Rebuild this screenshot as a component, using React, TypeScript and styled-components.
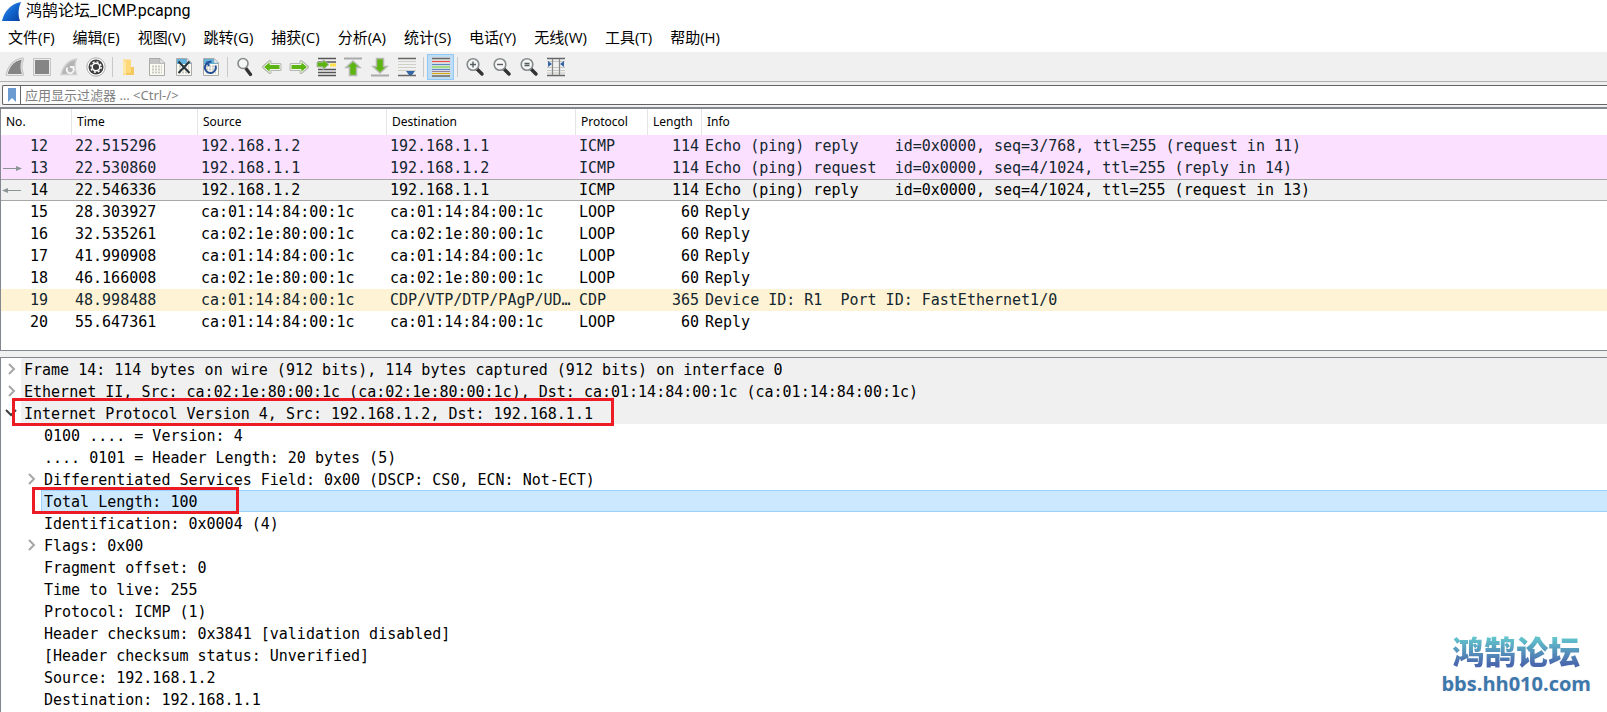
import React from 'react';
import styled, { createGlobalStyle, css } from 'styled-components';

const MONO = '"DejaVu Sans Mono", "Liberation Mono", monospace';
const UI = '"Noto Sans", "Noto Sans CJK SC", sans-serif';
const CHROME = '"Open Sans", "Noto Sans CJK SC", sans-serif';

const Global = createGlobalStyle`
  *, *::before, *::after { box-sizing: border-box; }
  html, body { margin: 0; height: 100%; overflow: hidden; }
  body { background: #fff; color: #000; font-family: ${UI}; }
  #root { height: 100%; }
  button { font: inherit; color: inherit; background: none; border: 0; padding: 0; margin: 0; }
`;

const Window = styled.div`
  position: relative;
  display: flex;
  flex-direction: column;
  height: 100%;
  background: #f0f0f0;
`;

const TitleBar = styled.header`
  display: flex;
  align-items: center;
  gap: 4px;
  height: 24px;
  padding-left: 2px;
  background: #fff;
`;

const Title = styled.h1`
  margin: 0;
  font-family: "Roboto", "Noto Sans CJK SC", sans-serif;
  font-size: 16px;
  font-weight: 400;
  line-height: 22px;
  height: 24px;
`;

const MenuBar = styled.nav`
  display: flex;
  gap: 2px;
  height: 28px;
  background: #fff;
`;

const MenuItem = styled.button`
  && {
    padding: 0 8px;
    font-family: ${CHROME};
    font-size: 15px;
    line-height: 26px;
  }
  height: 26px;
  white-space: nowrap;
`;

const Toolbar = styled.div`
  display: flex;
  align-items: center;
  height: 30px;
  padding-left: 1px;
  border-bottom: 1px solid #b0b0b0;
`;

const ToolButton = styled.button<{ $active?: boolean }>`
  display: flex;
  align-items: center;
  justify-content: center;
  width: 27px;
  height: 26px;
  ${p => p.$active && css`
    && { background: #c0dcf3; border: 1px solid #90c8f6; }
  `}
`;

const Divider = styled.span`
  width: 1px;
  height: 20px;
  margin: 0 3px;
  background: #c8c8c8;
`;

const FilterBar = styled.div`
  display: flex;
  margin: 3px 0 2px 2px;
  height: 20px;
  border: 1px solid #646464;
  border-right: 0;
  border-radius: 2px 0 0 2px;
  background: #fff;
`;

const Bookmark = styled.button`
  display: flex;
  align-items: center;
  justify-content: center;
  width: 18px;
  && { border-right: 1px solid #646464; }
`;

const FilterInput = styled.input`
  flex: 1;
  min-width: 0;
  padding: 0 4px;
  border: 0;
  outline: 0;
  background: transparent;
  font-family: ${UI};
  font-size: 13px;
  &::placeholder { color: #808080; opacity: 1; }
`;

const Pane = styled.section<{ $grow?: boolean }>`
  border: 1px solid #828790;
  border-right: 0;
  background: #fff;
  overflow: hidden;
  ${p => p.$grow ? css`flex: 1; border-bottom: 0; min-height: 0;` : css`border-top-width: 2px; padding-bottom: 17px;`}
`;

const Splitter = styled.div`
  height: 6px;
  flex: none;
`;

const PacketTable = styled.table`
  width: 100%;
  table-layout: fixed;
  border-collapse: separate;
  border-spacing: 0;
`;

const HeadCell = styled.th`
  height: 26px;
  padding: 0 0 0 5px;
  border-right: 1px solid #e5e5e5;
  font-size: 12px;
  font-weight: 400;
  line-height: 26px;
  text-align: left;
  &:last-child { border-right: 0; }
`;

type Tone = 'icmp' | 'selected' | 'plain' | 'cdp';
const tones = {
  icmp: css`background: #fce0ff; color: #12272e;`,
  selected: css`background: #f0f0f0; td { border-top: 1px solid #a8a8a8; border-bottom: 1px solid #a8a8a8; line-height: 20px; }`,
  plain: css`background: #fff;`,
  cdp: css`background: #fff3d6; color: #12272e;`,
};

const PacketRow = styled.tr<{ $tone: Tone }>`
  ${p => tones[p.$tone]}
`;

const Cell = styled.td<{ $right?: boolean }>`
  height: 22px;
  padding: 0 0 0 3px;
  font-family: ${MONO};
  font-size: 15px;
  line-height: 22px;
  white-space: pre;
  overflow: hidden;
  text-overflow: ellipsis;
  &:first-child { padding-left: 1px; }
  ${p => p.$right && css`padding-right: 3px; text-align: right;`}
`;

const NumberBox = styled.span`
  display: grid;
  grid-template-columns: 20px 1fr;
  align-items: center;
  column-gap: 8px;
`;

const Tree = styled.ul`
  margin: 0;
  padding: 0;
  list-style: none;
`;

const TreeRow = styled.li<{ $level: number }>`
  display: flex;
  height: 22px;
  padding-left: ${p => p.$level * 20}px;
`;

const Expander = styled.button`
  display: flex;
  align-items: center;
  justify-content: center;
  width: 20px;
  flex: none;
`;

const Gutter = styled.span`
  width: 20px;
  flex: none;
`;

const TreeText = styled.span<{ $tone?: 'header' | 'selected' }>`
  position: relative;
  flex: 1;
  padding-left: 3px;
  font-family: ${MONO};
  font-size: 15px;
  line-height: 24px;
  white-space: pre;
  ${p => p.$tone === 'header' && css`background: #f0f0f0;`}
  ${p => p.$tone === 'selected' && css`
    background: #cce8ff;
    box-shadow: inset 0 1px #99d1ff, inset 0 -1px #99d1ff, inset 1px 0 #99d1ff;
  `}
`;

const RedBox = styled.span<{ $width: number; $bleed: number }>`
  position: absolute;
  z-index: 1;
  left: -9px;
  top: -${p => p.$bleed}px;
  width: ${p => p.$width}px;
  height: ${p => 24 + p.$bleed}px;
  border: 3px solid #ed1c24;
`;

const Watermark = styled.div`
  position: absolute;
  right: 16px;
  bottom: 14px;
  display: flex;
  flex-direction: column;
  align-items: center;
  text-shadow: 0 0 2px #f0dfe4;
`;

const WatermarkName = styled.strong`
  font-family: "Noto Sans CJK SC", sans-serif;
  font-size: 32px;
  font-weight: 900;
  line-height: 40px;
  background: linear-gradient(#62c4cc 20%, #4a68ad 85%);
  background-clip: text;
  -webkit-background-clip: text;
  color: transparent;
  text-shadow: none;
`;

const WatermarkSite = styled.span`
  font-family: "Open Sans", sans-serif;
  font-size: 20px;
  font-weight: 700;
  line-height: 28px;
  color: #3c78ac;
`;

const Icon = ({ children, w = 20, h = 20 }: { children: React.ReactNode; w?: number; h?: number }) => (
  <svg width={w} height={h} viewBox={`0 0 ${w} ${h}`} fill="none" aria-hidden="true">{children}</svg>
);

const Page = ({ head }: { head: string }) => (
  <>
    <path d="M2.500 1.500H13L17.500 6V18.500H2.500Z" fill="#fbfaf0" stroke="#aaa" />
    <path d="M3 2H13V6H17V7H3Z" fill={head} />
    <path d="M13 1.500V6H17.500Z" fill="#e8eef2" stroke="#aaa" strokeWidth=".6" />
    <path d="M5 9.500H15M5 12.500H15M5 15.500H15" stroke="#c9c9c4" strokeDasharray="2 1" strokeWidth="2" />
  </>
);

const ARROW = 'M1.500 10L8 4.500V7.500H18V12.500H8V15.500Z';
const Arrow = ({ transform }: { transform?: string }) => (
  <g transform={transform} strokeLinejoin="round">
    <path d={ARROW} stroke="#b4b8b0" strokeWidth="3" />
    <path d={ARROW} fill="#5cb512" stroke="#f0f4ea" strokeWidth="1" />
  </g>
);

const Lens = ({ sign }: { sign?: string }) => (
  <>
    <path d="M12 12L17 17" stroke="#333" strokeWidth="3.400" strokeLinecap="round" />
    <circle cx="8" cy="7.500" r="5.800" fill="#f5f7f7" stroke="#858b8b" strokeWidth="1.600" />
    {sign && <path d={sign} stroke="#555d60" strokeWidth="1.400" />}
  </>
);

const FIN = 'M2 17.500C4 10 8 3.500 17.500 2C15.500 7 15.500 12 17.500 17.500Z';

type Tool = { label: string; art: React.ReactNode; active?: boolean } | null;
const tools: Tool[] = [
  { label: '开始捕获', art: <><path d={FIN} stroke="#c4c4c4" strokeWidth="3" strokeLinejoin="round" /><path d={FIN} fill="#858585" stroke="#ececec" strokeWidth="1" /></> },
  { label: '停止捕获', art: <><rect x="1" y="1" width="18" height="18" fill="#c4c4c4" /><rect x="2" y="2" width="16" height="16" fill="#ececec" /><rect x="3" y="3" width="14" height="14" fill="#858585" /></> },
  { label: '重新捕获', art: <><path d={FIN} fill="#b4b4b4" stroke="#d0d0d0" strokeWidth="1.500" /><path d="M8.500 10.500A3.500 3.500 0 1 0 14 10.500M14.500 14V10H11" stroke="#f4f4f4" strokeWidth="1.800" /></> },
  { label: '捕获选项', art: <><circle cx="10" cy="10" r="9.200" fill="#fff" stroke="#aaa" /><circle cx="10" cy="10" r="7.500" fill="#3c3c3c" /><circle cx="10" cy="10" r="3.800" stroke="#fff" strokeWidth="1.500" /><circle cx="10" cy="10" r="5.200" stroke="#fff" strokeWidth="1.400" strokeDasharray="2 2.080" /></> },
  null,
  { label: '打开', art: <><path d="M3 2.500H11V18H3Z" fill="#ffd978" /><path d="M11 10H14V18H6V16H11Z" fill="#f3c95f" /><path d="M3 2.500L6 5V18L3 16Z" fill="#ffe7a6" /></> },
  { label: '保存', art: <Page head="#c4c4c4" /> },
  { label: '关闭', art: <><Page head="#62b2dc" /><path d="M4.500 4.500L15.500 16M15.500 4.500L4.500 16" stroke="#26343a" strokeWidth="2" /></> },
  { label: '重新加载', art: <><Page head="#62b2dc" /><path d="M7 5.500A5.500 5.500 0 1 0 14.500 8.500M10.500 4.500L6.500 5.500L8 9" stroke="#24509a" strokeWidth="2" /></> },
  null,
  { label: '查找', art: <><path d="M11 11.500L15.500 17.500" stroke="#333" strokeWidth="3.400" strokeLinecap="round" /><circle cx="8" cy="6.500" r="5" fill="#f5f7f7" stroke="#858b8b" strokeWidth="1.600" /></> },
  { label: '后退', art: <Arrow /> },
  { label: '前进', art: <Arrow transform="rotate(180 10 10)" /> },
  { label: '转到分组', art: <><path d="M2 1.500H20M2 5H20M2 12.500H20M2 15.500H20M2 18.500H20" stroke="#555" strokeWidth="1.400" /><path d="M14 6.500H20V9.500H14Z" fill="#ffe04a" /><path d="M1 5H7V2.500L13 7.500L7 12.500V10H1Z" fill="#5cb512" stroke="#b4b8b0" /></> },
  { label: '首个分组', art: <><path d="M1 1.500H19" stroke="#aaa" strokeWidth="2" /><path d="M10 4L17 10.500H13.500V18.500H6.500V10.500H3Z" fill="#5cb512" stroke="#b4b8b0" strokeWidth="1.500" /></> },
  { label: '最新分组', art: <><path d="M1 18.500H19" stroke="#aaa" strokeWidth="2" /><path d="M10 16L17 9.500H13.500V1.500H6.500V9.500H3Z" fill="#5cb512" stroke="#b4b8b0" strokeWidth="1.500" /></> },
  { label: '自动滚动', art: <><path d="M1 1.500H19M1 18.500H19" stroke="#666" strokeWidth="1.400" /><path d="M1 4.500H19M1 7.500H19M1 10.500H19M1 13.500H19" stroke="#cfcfc8" /><path d="M9 14H18L15 18H12Z" fill="#3465a4" /></> },
  null,
  { label: '着色', active: true, art: <><path d="M1 0H19V20H1Z" fill="#dfe6e6" /><path d="M1 1.500H19M1 19H19" stroke="#666" strokeWidth="1.400" /><path d="M1 4.500H19" stroke="#ef4a4a" strokeWidth="1.200" /><path d="M1 7.500H19" stroke="#5a86c4" strokeWidth="1.200" /><path d="M1 10H19" stroke="#7ed43a" strokeWidth="1.200" /><path d="M1 12.500H19" stroke="#5a86c4" strokeWidth="1.200" /><path d="M1 14.500H19" stroke="#9a7d9c" strokeWidth="1" /><path d="M1 16.500H19" stroke="#d9a818" strokeWidth="1.200" /></> },
  null,
  { label: '放大', art: <Lens sign="M5 7.500H11M8 4.500V10.500" /> },
  { label: '缩小', art: <Lens sign="M5 7.500H11" /> },
  { label: '正常大小', art: <Lens sign="M5.500 6.500H10.500M5.500 8.500H10.500" /> },
  { label: '调整列宽', art: <><path d="M1 1.500H19M1 18.500H19" stroke="#666" strokeWidth="1.400" /><path d="M1 4.500H19M1 10.500H19M1 13.500H19M1 16H19" stroke="#c8c8c2" /><path d="M6.500 2V18M13.500 2V18" stroke="#888" strokeWidth="1.200" /><path d="M2 4L6 7L2 10ZM18 4L14 7L18 10Z" fill="#3465a4" /></> },
];

const menus = ['文件(F)', '编辑(E)', '视图(V)', '跳转(G)', '捕获(C)', '分析(A)', '统计(S)', '电话(Y)', '无线(W)', '工具(T)', '帮助(H)'];

type Packet = { tone: Tone; mark?: 'out' | 'in'; cells: string[] };
const MAC1 = 'ca:01:14:84:00:1c';
const MAC2 = 'ca:02:1e:80:00:1c';
const packets: Packet[] = [
  { tone: 'icmp', cells: ['12', '22.515296', '192.168.1.2', '192.168.1.1', 'ICMP', '114', 'Echo (ping) reply    id=0x0000, seq=3/768, ttl=255 (request in 11)'] },
  { tone: 'icmp', mark: 'out', cells: ['13', '22.530860', '192.168.1.1', '192.168.1.2', 'ICMP', '114', 'Echo (ping) request  id=0x0000, seq=4/1024, ttl=255 (reply in 14)'] },
  { tone: 'selected', mark: 'in', cells: ['14', '22.546336', '192.168.1.2', '192.168.1.1', 'ICMP', '114', 'Echo (ping) reply    id=0x0000, seq=4/1024, ttl=255 (request in 13)'] },
  { tone: 'plain', cells: ['15', '28.303927', MAC1, MAC1, 'LOOP', '60', 'Reply'] },
  { tone: 'plain', cells: ['16', '32.535261', MAC2, MAC2, 'LOOP', '60', 'Reply'] },
  { tone: 'plain', cells: ['17', '41.990908', MAC1, MAC1, 'LOOP', '60', 'Reply'] },
  { tone: 'plain', cells: ['18', '46.166008', MAC2, MAC2, 'LOOP', '60', 'Reply'] },
  { tone: 'cdp', cells: ['19', '48.998488', MAC1, 'CDP/VTP/DTP/PAgP/UD…', 'CDP', '365', 'Device ID: R1  Port ID: FastEthernet1/0'] },
  { tone: 'plain', cells: ['20', '55.647361', MAC1, MAC1, 'LOOP', '60', 'Reply'] },
];

const columns: { name: string; width?: number }[] = [
  { name: 'No.', width: 71 },
  { name: 'Time', width: 126 },
  { name: 'Source', width: 189 },
  { name: 'Destination', width: 189 },
  { name: 'Protocol', width: 72 },
  { name: 'Length', width: 54 },
  { name: 'Info' },
];

type Node = { level: number; text: string; state?: 'open' | 'closed'; tone?: 'header' | 'selected'; box?: [number, number] };
const nodes: Node[] = [
  { level: 0, state: 'closed', tone: 'header', text: 'Frame 14: 114 bytes on wire (912 bits), 114 bytes captured (912 bits) on interface 0' },
  { level: 0, state: 'closed', tone: 'header', text: `Ethernet II, Src: ${MAC2} (${MAC2}), Dst: ${MAC1} (${MAC1})` },
  { level: 0, state: 'open', tone: 'header', box: [602, 4], text: 'Internet Protocol Version 4, Src: 192.168.1.2, Dst: 192.168.1.1' },
  { level: 1, text: '0100 .... = Version: 4' },
  { level: 1, text: '.... 0101 = Header Length: 20 bytes (5)' },
  { level: 1, state: 'closed', text: 'Differentiated Services Field: 0x00 (DSCP: CS0, ECN: Not-ECT)' },
  { level: 1, tone: 'selected', box: [207, 3], text: 'Total Length: 100' },
  { level: 1, text: 'Identification: 0x0004 (4)' },
  { level: 1, state: 'closed', text: 'Flags: 0x00' },
  { level: 1, text: 'Fragment offset: 0' },
  { level: 1, text: 'Time to live: 255' },
  { level: 1, text: 'Protocol: ICMP (1)' },
  { level: 1, text: 'Header checksum: 0x3841 [validation disabled]' },
  { level: 1, text: '[Header checksum status: Unverified]' },
  { level: 1, text: 'Source: 192.168.1.2' },
  { level: 1, text: 'Destination: 192.168.1.1' },
];

const Mark = ({ dir }: { dir?: 'out' | 'in' }) => (
  <Icon w={20} h={8}>
    {dir === 'out' && <><path d="M1 4.500H15" stroke="#8a9494" /><path d="M14 2L20 4.500L14 7Z" fill="#8a9494" /></>}
    {dir === 'in' && <><path d="M5 4.500H19" stroke="#8a9494" /><path d="M6 2L0 4.500L6 7Z" fill="#8a9494" /></>}
  </Icon>
);

export default function App() {
  return (
    <Window>
      <Global />
      <TitleBar>
        <Icon w={20} h={22}>
          <defs>
            <linearGradient id="fin" x1="0" y1="0" x2="1" y2="1">
              <stop offset="0" stopColor="#5a9be8" />
              <stop offset=".5" stopColor="#1266cf" />
              <stop offset="1" stopColor="#0a3f9c" />
            </linearGradient>
          </defs>
          <path d="M0 20C2 11 8 3 19 1C16 8 16 14 18 20Z" fill="url(#fin)" />
        </Icon>
        <Title>鸿鹄论坛_ICMP.pcapng</Title>
      </TitleBar>
      <MenuBar>
        {menus.map(m => <MenuItem key={m}>{m}</MenuItem>)}
      </MenuBar>
      <Toolbar>
        {tools.map((t, i) => t
          ? <ToolButton key={i} aria-label={t.label} $active={t.active}><Icon>{t.art}</Icon></ToolButton>
          : <Divider key={i} />)}
      </Toolbar>
      <FilterBar>
        <Bookmark aria-label="书签">
          <Icon w={10} h={14}><path d="M1 0H9V14L5 10L1 14Z" fill="#6c9bd2" /></Icon>
        </Bookmark>
        <FilterInput aria-label="显示过滤器" placeholder="应用显示过滤器 … <Ctrl-/>" />
      </FilterBar>
      <Pane>
        <PacketTable>
          <colgroup>
            {columns.map(c => <col key={c.name} width={c.width} />)}
          </colgroup>
          <thead>
            <tr>{columns.map(c => <HeadCell key={c.name}>{c.name}</HeadCell>)}</tr>
          </thead>
          <tbody>
            {packets.map(p => (
              <PacketRow key={p.cells[0]} $tone={p.tone}>
                {p.cells.map((c, i) => (
                  <Cell key={i} $right={i === 5}>
                    {i === 0 ? <NumberBox><Mark dir={p.mark} />{c}</NumberBox> : c}
                  </Cell>
                ))}
              </PacketRow>
            ))}
          </tbody>
        </PacketTable>
      </Pane>
      <Splitter />
      <Pane $grow>
        <Tree>
          {nodes.map(n => (
            <TreeRow key={n.text} $level={n.level}>
              {n.state ? (
                <Expander aria-label={n.state === 'open' ? '折叠' : '展开'}>
                  <Icon w={12} h={12}>
                    {n.state === 'open'
                      ? <path d="M1 3L6 8L11 3" stroke="#404040" strokeWidth="2" />
                      : <path d="M4 1L9 6L4 11" stroke="#a6a6a6" strokeWidth="2" />}
                  </Icon>
                </Expander>
              ) : <Gutter />}
              <TreeText $tone={n.tone}>
                {n.text}
                {n.box && <RedBox $width={n.box[0]} $bleed={n.box[1]} />}
              </TreeText>
            </TreeRow>
          ))}
        </Tree>
      </Pane>
      <Watermark>
        <WatermarkName>鸿鹄论坛</WatermarkName>
        <WatermarkSite>bbs.hh010.com</WatermarkSite>
      </Watermark>
    </Window>
  );
}
